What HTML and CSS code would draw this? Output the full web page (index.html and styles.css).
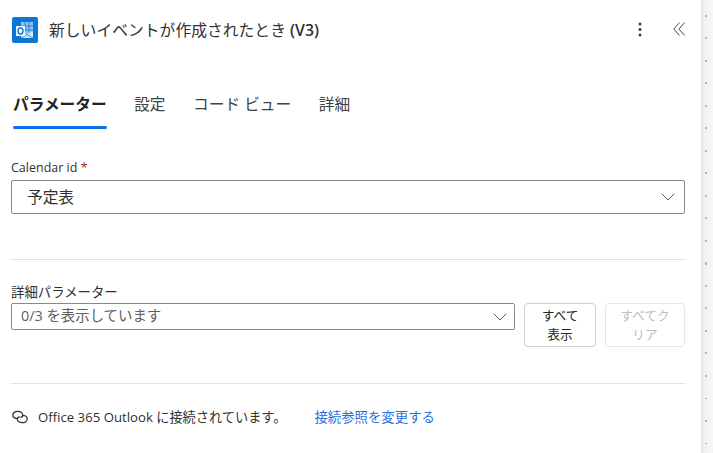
FILE: index.html
```html
<!DOCTYPE html>
<html lang="ja">
<head>
<meta charset="utf-8">
<title>新しいイベントが作成されたとき (V3)</title>
<link rel="stylesheet" href="styles.css">
</head>
<body>
<div class="app">
  <main class="panel">
    <header class="head">
      <div class="logo">
        <svg width="26" height="26" viewBox="0 0 26 26">
          <rect width="26" height="26" rx="2" fill="#0a78d4"/>
          <path d="M9 5h12v16H9z" fill="#8fc4ee"/>
          <path d="M9 9h12M9 13h12M13 5v10M17 5v10" stroke="#0a78d4" stroke-width=".8" fill="none"/>
          <path d="M10 15l5 3 6-4v7H10z" fill="#d3e9fa"/>
          <path d="M10 21l5-3.500 6 3.500" stroke="#0a78d4" stroke-width=".7" fill="none"/>
          <rect x="4" y="9" width="9" height="10" fill="#f4f9fd"/>
          <ellipse cx="8.500" cy="14" rx="2.500" ry="3" fill="none" stroke="#0a78d4" stroke-width="1.400"/>
        </svg>
      </div>
      <h1 class="title">新しいイベントが作成されたとき <span class="version">(V3)</span></h1>
      <button class="icon-btn dots" aria-label="その他">
        <svg width="4" height="15" viewBox="0 0 4 15"><circle cx="2" cy="2" r="1.500" fill="#3d3d3d"/><circle cx="2" cy="7.500" r="1.500" fill="#3d3d3d"/><circle cx="2" cy="13" r="1.500" fill="#3d3d3d"/></svg>
      </button>
      <button class="icon-btn collapse" aria-label="折りたたむ">
        <svg width="12" height="14" viewBox="0 0 12 14"><path d="M6.500.5L.7 7l5.800 6.500M11.700.5L5.900 7l5.800 6.500" fill="none" stroke="#444" stroke-width="1"/></svg>
      </button>
    </header>

    <nav class="tabs">
      <a class="tab active">パラメーター</a>
      <a class="tab">設定</a>
      <a class="tab">コード ビュー</a>
      <a class="tab">詳細</a>
    </nav>

    <section class="field">
      <label class="label">Calendar id <span class="req">*</span></label>
      <div class="select big">
        <span class="sel-text">予定表</span>
        <svg class="chev" width="14" height="8" viewBox="0 0 14 8"><path d="M.7.7L7 7 13.300.7" fill="none" stroke="#555" stroke-width="1"/></svg>
      </div>
    </section>

    <hr class="rule first">

    <section class="advanced">
      <label class="label adv-label">詳細パラメーター</label>
      <div class="adv-row">
        <div class="select small">
          <span class="sel-text">0/3 を表示しています</span>
          <svg class="chev" width="14" height="8" viewBox="0 0 14 8"><path d="M.7.7L7 7 13.300.7" fill="none" stroke="#555" stroke-width="1"/></svg>
        </div>
        <button class="btn show">すべて<br>表示</button>
        <button class="btn clear">すべてク<br>リア</button>
      </div>
    </section>

    <hr class="rule second">

    <footer class="conn">
      <svg class="conn-icon" width="16" height="14" viewBox="0 0 16 14"><path d="M4.800 8.600C2.400 8.400.8 7 .8 5.100.8 2.900 3 1.300 5.800 1.300c2.700 0 4.900 1.500 4.900 3.600 0 1.400-1.100 2.300-2.400 2.300M11.200 5.400c2.400.2 4 1.600 4 3.500 0 2.200-2.200 3.800-5 3.800-2.700 0-4.900-1.500-4.900-3.600 0-1.400 1.100-2.300 2.400-2.300" fill="none" stroke="#333" stroke-width="1.300"/></svg>
      <span class="conn-text">Office 365 Outlook に接続されています。</span>
      <a class="conn-link">接続参照を変更する</a>
    </footer>
  </main>
  <aside class="gutter"></aside>
</div>
</body>
</html>
```
FILE: styles.css
```css
* { box-sizing: border-box; }
html, body { margin: 0; height: 100%; overflow: hidden; background: #fff; }
body { font-family: "Open Sans", "Noto Sans CJK JP", sans-serif; color: #242424; }
.app { display: flex; height: 453px; }
.panel { width: 701px; flex: none; padding: 0 16px 0 11px; }
.gutter {
  flex: 1;
  border-left: 2px solid #e6e6e6;
  background:
    repeating-linear-gradient(180deg, transparent 0 15px, #b5b5b5 15px 17px, transparent 17px 22.500px) 2px 0 / 2px 100% no-repeat,
    linear-gradient(90deg, #f0f0f0, #f6f6f6);
}
.head { display: flex; align-items: center; height: 30px; margin-top: 15px; }
.logo { width: 26px; height: 26px; flex: none; margin-left: 1px; }
.logo svg { display: block; }
.title { margin: 0 0 0 11px; flex: 1; font-size: 15.800px; font-weight: 400; color: #323130; line-height: 30px; white-space: nowrap; }
.version { font-weight: 600; }
.icon-btn { border: 0; background: none; padding: 0; display: block; }
.icon-btn svg { display: block; }
.dots { margin-right: 31px; margin-top: -2px; }
.collapse { margin-top: -2px; }
.tabs { display: flex; gap: 27.500px; margin-top: 43px; margin-left: 2px; }
.tab { display: block; height: 41px; padding-top: 4px; font-size: 15.700px; line-height: 24px; color: #424242; position: relative; white-space: nowrap; }
.tab.active { font-weight: 700; color: #242424; }
.tab.active::after { content: ""; position: absolute; left: 0; right: 0; bottom: 0; height: 3px; border-radius: 2px; background: #0f6fe8; }
.field { margin-top: 30px; }
.label { display: block; font-size: 12.500px; line-height: 18px; color: #323130; }
.req { color: #a4262c; }
.select { display: flex; align-items: center; justify-content: space-between; border: 1px solid #8a8a8a; border-radius: 2px; background: #fff; }
.select.big { height: 34px; margin-top: 3px; padding: 0 9px 2px 15px; font-size: 15.700px; color: #323130; }
.select.small { width: 504px; height: 27px; padding: 0 7px 4px 9px; font-size: 14.400px; color: #605e5c; flex: none; }
.chev { flex: none; }
.select.big .chev { margin-top: 2px; }
.select.small .chev { margin-top: 4px; }
.rule { margin: 0; border: 0; border-top: 1px solid #e1e1e1; }
.rule.first { margin-top: 45px; }
.advanced { margin-top: 23px; }
.adv-label { font-size: 13.400px; line-height: 18px; }
.adv-row { display: flex; align-items: flex-start; margin-top: 2px; }
.btn { height: 44px; padding: 0; border: 1px solid #d1d1d1; border-radius: 4px; background: #fff; font-family: inherit; font-size: 12.700px; line-height: 19px; color: #242424; }
.btn.show { width: 72px; margin-left: 9px; }
.btn.clear { width: 80px; margin-left: 9px; border-color: #e6e6e6; color: #bdbdbd; }
.rule.second { margin-top: 36px; }
.conn { display: flex; align-items: center; height: 20px; margin-top: 23px; font-size: 13.200px; line-height: 20px; }
.conn-icon { flex: none; margin: 0 10px 0 1px; }
.conn-text { color: #323130; }
.conn-link { margin-left: 28px; font-size: 13.400px; color: #1f6fe0; }
```
